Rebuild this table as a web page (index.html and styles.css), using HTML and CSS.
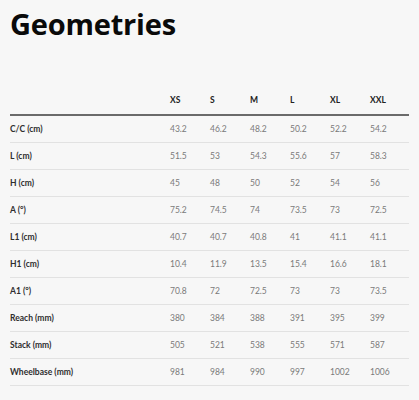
FILE: index.html
```html
<!DOCTYPE html>
<html lang="en">
<head>
<meta charset="utf-8">
<title>Geometries</title>
<link rel="stylesheet" href="styles.css">
</head>
<body>
<main class="page">
  <h1 class="title">Geometries</h1>
  <table class="geo">
    <colgroup>
      <col class="c-label"><col class="c-size"><col class="c-size"><col class="c-size"><col class="c-size"><col class="c-size"><col class="c-last">
    </colgroup>
    <thead>
      <tr><th></th><th>XS</th><th>S</th><th>M</th><th>L</th><th>XL</th><th>XXL</th></tr>
    </thead>
    <tbody>
      <tr><th>C/C (cm)</th><td>43.2</td><td>46.2</td><td>48.2</td><td>50.2</td><td>52.2</td><td>54.2</td></tr>
      <tr><th>L (cm)</th><td>51.5</td><td>53</td><td>54.3</td><td>55.6</td><td>57</td><td>58.3</td></tr>
      <tr><th>H (cm)</th><td>45</td><td>48</td><td>50</td><td>52</td><td>54</td><td>56</td></tr>
      <tr><th>A (°)</th><td>75.2</td><td>74.5</td><td>74</td><td>73.5</td><td>73</td><td>72.5</td></tr>
      <tr><th>L1 (cm)</th><td>40.7</td><td>40.7</td><td>40.8</td><td>41</td><td>41.1</td><td>41.1</td></tr>
      <tr><th>H1 (cm)</th><td>10.4</td><td>11.9</td><td>13.5</td><td>15.4</td><td>16.6</td><td>18.1</td></tr>
      <tr><th>A1 (°)</th><td>70.8</td><td>72</td><td>72.5</td><td>73</td><td>73</td><td>73.5</td></tr>
      <tr><th>Reach (mm)</th><td>380</td><td>384</td><td>388</td><td>391</td><td>395</td><td>399</td></tr>
      <tr><th>Stack (mm)</th><td>505</td><td>521</td><td>538</td><td>555</td><td>571</td><td>587</td></tr>
      <tr><th>Wheelbase (mm)</th><td>981</td><td>984</td><td>990</td><td>997</td><td>1002</td><td>1006</td></tr>
    </tbody>
  </table>
</main>
</body>
</html>
```

FILE: styles.css
```css
html, body {
  margin: 0;
  padding: 0;
  background: #f7f7f7;
}

.page {
  padding: 0 10px;
  font-family: "Open Sans", "Noto Sans", sans-serif;
  color: #222;
}

.title {
  margin: 0;
  padding-top: 4px;
  font-size: 29px;
  line-height: 40px;
  font-weight: 700;
  color: #0a0a0a;
  letter-spacing: -0.2px;
}

.geo {
  margin-top: 43px;
  width: 399px;
  table-layout: fixed;
  border-collapse: collapse;
  font-family: "Lato", "Open Sans", sans-serif;
  font-size: 8.5px;
}

.c-label { width: 160px; }
.c-size { width: 40px; }
.c-last { width: 39px; }

.geo th,
.geo td {
  padding: 0;
  text-align: left;
  vertical-align: middle;
}

.geo thead th {
  font-weight: 700;
  color: #222;
  height: 26px;
  padding-bottom: 1px;
  border-bottom: 2px solid #6b6b6b;
}

.geo tbody th,
.geo tbody td {
  height: 26px;
  border-bottom: 1px solid #e2e2e2;
}

.geo tbody th {
  font-weight: 700;
  color: #2e2e2e;
}

.geo tbody td {
  font-weight: 400;
  color: #7a7a7a;
}
```
